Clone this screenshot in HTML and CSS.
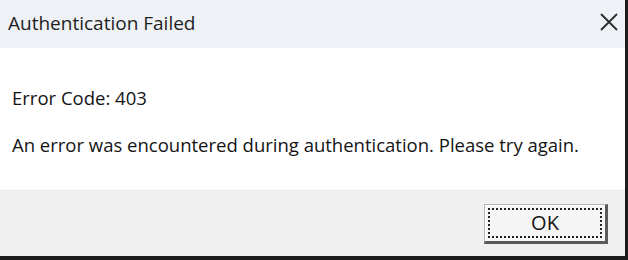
FILE: index.html
```html
<!DOCTYPE html>
<html lang="en">
<head>
    <meta charset="UTF-8">
    <meta name="viewport" content="width=device-width, initial-scale=1.0">
    <title>Authentication Failed</title>
    <link rel="stylesheet" href="styles.css">
</head>
<body>
    <div class="dialog">
        <div class="titlebar">
            <span class="title">Authentication Failed</span>
            <button class="close" aria-label="Close">
                <svg width="18" height="18" viewBox="0 0 18 18">
                    <path d="M1 1 L17 17 M17 1 L1 17" stroke="#2b2b2b" stroke-width="1.8" fill="none"/>
                </svg>
            </button>
        </div>
        <div class="content">
            <p class="code">Error Code: 403</p>
            <p class="message">An error was encountered during authentication. Please try again.</p>
        </div>
        <div class="footer">
            <button class="ok"><span>OK</span></button>
        </div>
    </div>
</body>
</html>
```

FILE: styles.css
```css
body {
    margin: 0;
    background-color: #fff;
    font-family: "Open Sans", "Noto Sans", sans-serif;
    color: #1a1a1a;
}
.dialog {
    display: flex;
    flex-direction: column;
    width: 628px;
    height: 260px;
    box-sizing: border-box;
    border-right: 3px solid #1c1c1c;
    border-bottom: 4px solid #1c1c1c;
}
.titlebar {
    display: flex;
    align-items: center;
    justify-content: space-between;
    height: 48px;
    padding: 0 7px 0 8px;
    background-color: #eef1f6;
}
.title {
    font-size: 19px;
    color: #1e1e1e;
    margin-top: -2px;
}
.close {
    display: flex;
    padding: 0;
    border: none;
    background: none;
    margin-top: -4px;
}
.content {
    flex: 1;
    padding: 0 12px;
    background-color: #fff;
}
.content p {
    margin: 0;
    font-size: 18.5px;
    line-height: 25px;
    color: #141414;
}
.code {
    padding-top: 37px;
}
.message {
    padding-top: 22px;
}
.footer {
    display: flex;
    justify-content: flex-end;
    align-items: center;
    height: 66px;
    padding-right: 17px;
    box-sizing: border-box;
    background-color: #f0f0f0;
    border-top: 1px solid #e8e8e8;
}
.ok {
    width: 124px;
    height: 40px;
    padding: 3px;
    box-sizing: border-box;
    background-color: #f5f5f5;
    border: 1px solid;
    border-color: #b4b4b4 #5a5a5a #5a5a5a #b4b4b4;
    border-right-width: 3px;
    border-bottom-width: 3px;
    box-shadow: inset 1px 1px #fff;
    font-family: "Open Sans", "Noto Sans", sans-serif;
    font-size: 20px;
    color: #141414;
}
.ok span {
    display: flex;
    justify-content: center;
    align-items: center;
    height: 100%;
    box-sizing: border-box;
    border: 2px dotted #222;
}
```
